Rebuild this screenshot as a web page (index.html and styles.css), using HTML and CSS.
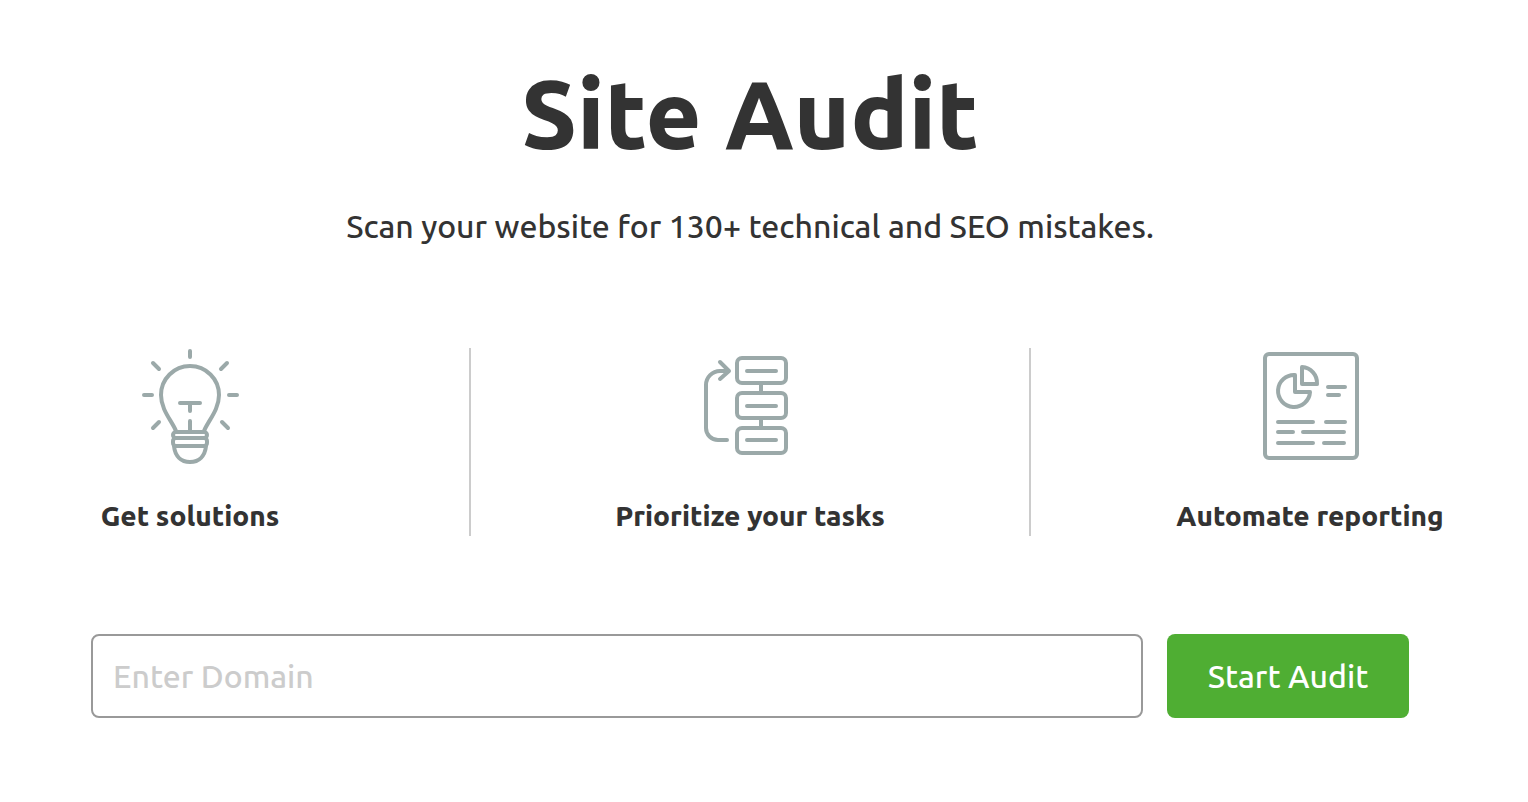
FILE: index.html
```html
<!DOCTYPE html>
<html lang="en">
<head>
    <meta charset="UTF-8">
    <meta name="viewport" content="width=device-width, initial-scale=1.0">
    <title>Site Audit</title>
    <link rel="stylesheet" href="styles.css">
</head>
<body>
    <main class="audit">
        <h1 class="title">Site Audit</h1>
        <p class="subtitle">Scan your website for 130+ technical and SEO mistakes.</p>

        <ul class="features">
            <li class="feature">
                <svg class="feature-icon" viewBox="0 0 120 120" aria-hidden="true">
                    <path d="M60 3v6M23 15l6 6M97 15l-6 6M14 47h8M99 47h8M23 80l6-6M98 80l-6-6"/>
                    <path d="M46 83C42 73 31 62 31 47a29 29 0 0 1 58 0c0 15-11 26-15 36"/>
                    <path d="M50 55h20M60 55v8M60 73v10"/>
                    <rect x="43" y="84" width="34" height="6" rx="3"/>
                    <rect x="43" y="90" width="34" height="8" rx="3"/>
                    <path d="M44 98c1 10 7 16 16 16s15-6 16-16"/>
                </svg>
                <h2 class="feature-name">Get solutions</h2>
            </li>
            <li class="feature">
                <svg class="feature-icon" viewBox="0 0 120 120" aria-hidden="true">
                    <rect x="47" y="10" width="49" height="25" rx="5"/>
                    <rect x="47" y="45" width="49" height="25" rx="5"/>
                    <rect x="47" y="80" width="49" height="25" rx="5"/>
                    <path d="M57 23h29M57 58h29M57 92h29M71 35v10M71 70v10"/>
                    <path d="M37 92h-9a12 12 0 0 1-12-12V37a14 14 0 0 1 14-14h8M30 14l9 9-9 8"/>
                </svg>
                <h2 class="feature-name">Prioritize your tasks</h2>
            </li>
            <li class="feature">
                <svg class="feature-icon" viewBox="0 0 120 120" aria-hidden="true">
                    <rect x="15" y="6" width="92" height="104" rx="4"/>
                    <path d="M45 27a16 16 0 1 0 15 17H45z"/>
                    <path d="M52 19v17h15a16 16 0 0 0-15-17z"/>
                    <path d="M78 39h17M78 47h11M28 74h35M76 74h19M28 84h15M53 84h41M28 95h35M74 95h20"/>
                </svg>
                <h2 class="feature-name">Automate reporting</h2>
            </li>
        </ul>

        <form class="audit-form">
            <input class="domain" type="text" name="domain" placeholder="Enter Domain" aria-label="Enter Domain">
            <button class="start" type="submit">Start Audit</button>
        </form>
    </main>
</body>
</html>
```

FILE: styles.css
```css
* {
    box-sizing: border-box;
}
html {
    overflow-x: hidden;
}
body {
    margin: 0;
    background-color: #fff;
    color: #333;
    font-family: Ubuntu, "Noto Sans", sans-serif;
    font-weight: 500;
}
.audit {
    margin-right: 28px;
    padding-top: 54px;
    text-align: center;
}
.title {
    margin: 0;
    font-size: 96px;
    font-weight: 800;
    line-height: 120px;
}
.subtitle {
    margin: 32px 0 0;
    font-size: 32px;
    line-height: 40px;
}
.features {
    display: grid;
    grid-template-columns: repeat(3, 1fr);
    margin: 102px -90px 0;
    padding: 0;
    list-style: none;
}
.feature {
    display: flex;
    flex-direction: column;
    align-items: center;
    height: 188px;
}
/* divider centered on the column edge */
.feature:not(:last-child) {
    box-shadow: 1px 0 #ccc, inset -1px 0 #ccc;
}
.feature-icon {
    width: 120px;
    height: 120px;
    fill: none;
    stroke: #9ba9a9;
    stroke-width: 4;
    stroke-linecap: round;
    stroke-linejoin: round;
}
.feature-name {
    margin: 30px 0 0;
    font-size: 28px;
    font-weight: 800;
    line-height: 36px;
}
.audit-form {
    display: flex;
    gap: 24px;
    margin: 98px 91px 0;
}
.domain, .start {
    height: 84px;
    border-radius: 8px;
    font-family: inherit;
    font-size: 32px;
    font-weight: inherit;
}
.domain {
    flex: 1;
    min-width: 0;
    padding: 0 20px;
    border: 2px solid #999;
    color: #333;
}
.domain::placeholder {
    color: #ccc;
    opacity: 1;
}
.start {
    width: 242px;
    padding: 0;
    border: 0;
    background-color: #4fae33;
    color: #fff;
    cursor: pointer;
}
```
